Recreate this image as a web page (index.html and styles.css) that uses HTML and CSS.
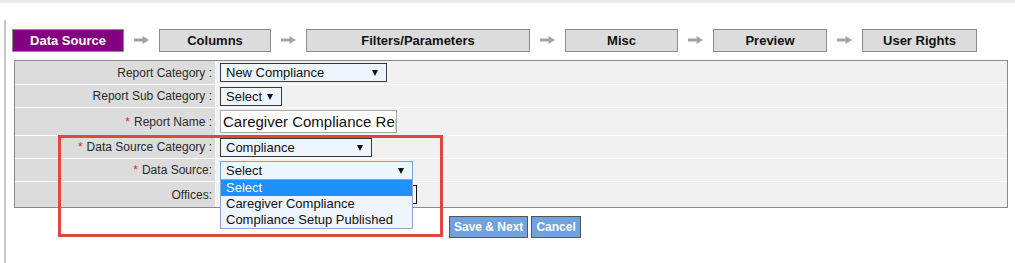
FILE: index.html
```html
<!DOCTYPE html>
<html>
<head>
<meta charset="utf-8">
<title>Report Wizard</title>
<link rel="stylesheet" href="styles.css">
</head>
<body>
<div class="topbar"></div>
<div class="page">
  <div class="steps">
    <div class="step active s-ds">Data Source</div>
    <div class="arrow"><svg width="15" height="8" viewBox="0 0 15 8"><path d="M0 2.5h8.5V0L15 4l-6.5 4V5.5H0z" fill="#a3a3a3"/></svg></div>
    <div class="step s-col">Columns</div>
    <div class="arrow"><svg width="15" height="8" viewBox="0 0 15 8"><path d="M0 2.5h8.5V0L15 4l-6.5 4V5.5H0z" fill="#a3a3a3"/></svg></div>
    <div class="step s-fil">Filters/Parameters</div>
    <div class="arrow"><svg width="15" height="8" viewBox="0 0 15 8"><path d="M0 2.5h8.5V0L15 4l-6.5 4V5.5H0z" fill="#a3a3a3"/></svg></div>
    <div class="step s-misc">Misc</div>
    <div class="arrow"><svg width="15" height="8" viewBox="0 0 15 8"><path d="M0 2.5h8.5V0L15 4l-6.5 4V5.5H0z" fill="#a3a3a3"/></svg></div>
    <div class="step s-prev">Preview</div>
    <div class="arrow"><svg width="15" height="8" viewBox="0 0 15 8"><path d="M0 2.5h8.5V0L15 4l-6.5 4V5.5H0z" fill="#a3a3a3"/></svg></div>
    <div class="step s-ur">User Rights</div>
  </div>

  <div class="form">
    <div class="lbl">Report Category :</div>
    <div class="val"><div class="sel w-cat">New Compliance</div></div>

    <div class="lbl">Report Sub Category :</div>
    <div class="val"><div class="sel w-sub">Select</div></div>

    <div class="lbl"><span class="req">*</span> Report Name :</div>
    <div class="val"><input class="input" type="text" value="Caregiver Compliance Report" readonly></div>

    <div class="lbl"><span class="req">*</span> Data Source Category :</div>
    <div class="val"><div class="sel w-dsc">Compliance</div></div>

    <div class="lbl"><span class="req">*</span> Data Source:</div>
    <div class="val">
      <div class="sel focus w-ds">Select
        <div class="menu">
          <div class="opt hl">Select</div>
          <div class="opt">Caregiver Compliance</div>
          <div class="opt">Compliance Setup Published</div>
        </div>
      </div>
    </div>

    <div class="lbl">Offices:</div>
    <div class="val"><div class="sel w-off"></div></div>
  </div>

  <div class="actions">
    <button class="btn">Save &amp; Next</button>
    <button class="btn">Cancel</button>
  </div>

  <div class="mark"></div>
</div>
</body>
</html>
```

FILE: styles.css
```css
* { box-sizing: border-box; }
html, body { margin: 0; padding: 0; background: #fff; }
body {
  font-family: "Liberation Sans", Arial, sans-serif;
  color: #222;
  height: 263px;
  overflow: hidden;
}
.topbar { height: 3px; background: #e9e9e9; }
.page {
  position: relative;
  margin: 17px 0 0 4px;
  border-left: 2px solid #c6c6c6;
  padding: 9px 0 0 6px;
  height: 243px;
}
.steps { display: flex; align-items: center; height: 23px; }
.step {
  height: 23px;
  line-height: 22px;
  border: 1px solid #8c8c8c;
  background: #dcdcdc;
  color: #111;
  font-weight: bold;
  font-size: 13px;
  text-align: center;
}
.step.active { background: #800080; color: #fff; }
.s-ds { width: 112px; }
.s-col { width: 112px; }
.s-fil { width: 224px; }
.s-misc { width: 113px; }
.s-prev { width: 114px; }
.s-ur { width: 115px; }
.arrow { width: 35px; display: flex; justify-content: center; align-items: center; padding-bottom: 1px; }
.arrow svg { display: block; }

.form {
  margin: 8px 7px 0 2px;
  border: 1px solid #8a8a8a;
  background: #fff;
  display: grid;
  grid-template-columns: 200px 1fr;
  grid-template-rows: 23px 22px 27px 22px 22px 25px;
  column-gap: 1px;
  row-gap: 1px;
}
.lbl {
  background: #dcdcdc;
  font-size: 12px;
  color: #2a2a2a;
  text-align: right;
  padding-right: 3px;
  display: flex;
  align-items: center;
  justify-content: flex-end;
}
.req { color: #e02020; margin-right: 4px; }
.val {
  background: #f1f1f1;
  display: flex;
  align-items: center;
  padding-left: 4px;
}
.sel {
  position: relative;
  height: 19px;
  line-height: 17px;
  border: 1px solid #3a3a3a;
  background: #eef5fc;
  font-size: 13px;
  color: #111;
  padding-left: 5px;
}
.sel::after {
  content: "";
  position: absolute;
  right: 8px;
  top: 6px;
  width: 0;
  height: 0;
  border-left: 3px solid transparent;
  border-right: 3px solid transparent;
  border-top: 6px solid #111;
}
.sel.focus { border-color: #7aa3d8; }
.w-cat { width: 167px; }
.w-sub { width: 62px; }
.w-dsc { width: 152px; }
.w-ds { width: 193px; }
.w-off { width: 197px; background: #fff; border-color: #111; }
.w-off::after { display: none; }
.input {
  width: 177px;
  height: 23px;
  margin: 0;
  border: 1px solid #a9a9a9;
  background: #fff;
  font-family: "Liberation Sans", Arial, sans-serif;
  font-size: 15px;
  line-height: 21px;
  padding: 0 0 0 2px;
  color: #111;
  outline: none;
}
.menu {
  position: absolute;
  left: -1px;
  top: 17px;
  width: 193px;
  border: 1px solid #8aa6cf;
  background: #eef5fc;
  z-index: 5;
}
.opt {
  height: 16px;
  line-height: 16px;
  font-size: 13px;
  padding-left: 5px;
  color: #111;
  white-space: nowrap;
}
.opt.hl { background: #1e90ff; color: #fff; }

.actions {
  display: flex;
  gap: 3px;
  margin: 8px 0 0 437px;
}
.btn {
  height: 22px;
  padding: 0 4px;
  border: 1px solid #555;
  background: #70a2dc;
  color: #fff;
  font-family: "Liberation Sans", Arial, sans-serif;
  font-weight: bold;
  font-size: 12px;
  cursor: pointer;
}

.mark {
  position: absolute;
  left: 52px;
  top: 115px;
  width: 385px;
  height: 102px;
  border: 3px solid #e5453f;
  pointer-events: none;
  z-index: 6;
}
```
